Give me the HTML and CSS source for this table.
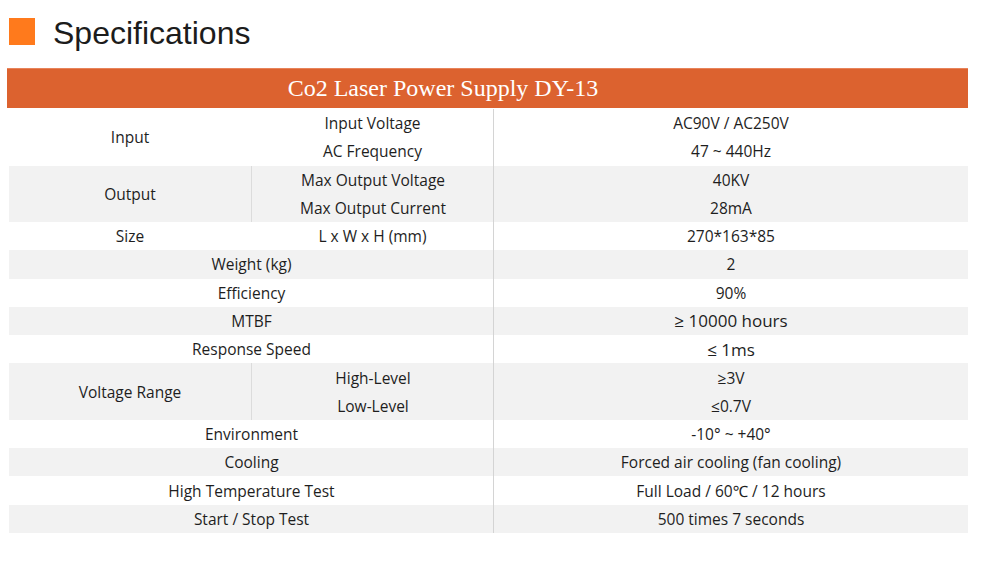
FILE: index.html
```html
<!DOCTYPE html>
<html lang="en">
<head>
<meta charset="utf-8">
<title>Specifications</title>
<link rel="stylesheet" href="styles.css">
</head>
<body>
<div class="page">
  <div class="heading">
    <span class="square"></span>
    <h1 class="title">Specifications</h1>
  </div>
  <div class="bar">Co2 Laser Power Supply DY-13</div>
  <div class="spec">
    <div class="cell c1 span2">Input</div>
    <div class="cell c2">Input Voltage</div>
    <div class="cell c3">AC90V / AC250V</div>
    <div class="cell c2">AC Frequency</div>
    <div class="cell c3">47 ~ 440Hz</div>

    <div class="cell c1 span2 grey">Output</div>
    <div class="cell c2 grey split">Max Output Voltage</div>
    <div class="cell c3 grey">40KV</div>
    <div class="cell c2 grey split">Max Output Current</div>
    <div class="cell c3 grey">28mA</div>

    <div class="cell c1">Size</div>
    <div class="cell c2">L x W x H (mm)</div>
    <div class="cell c3">270*163*85</div>

    <div class="cell wide grey">Weight (kg)</div>
    <div class="cell c3 grey">2</div>

    <div class="cell wide">Efficiency</div>
    <div class="cell c3">90%</div>

    <div class="cell wide grey">MTBF</div>
    <div class="cell c3 grey big">≥ 10000 hours</div>

    <div class="cell wide">Response Speed</div>
    <div class="cell c3 big">≤ 1ms</div>

    <div class="cell c1 span2 grey">Voltage Range</div>
    <div class="cell c2 grey split">High-Level</div>
    <div class="cell c3 grey">≥3V</div>
    <div class="cell c2 grey split">Low-Level</div>
    <div class="cell c3 grey">≤0.7V</div>

    <div class="cell wide">Environment</div>
    <div class="cell c3">-10° ~ +40°</div>

    <div class="cell wide grey">Cooling</div>
    <div class="cell c3 grey">Forced air cooling (fan cooling)</div>

    <div class="cell wide">High Temperature Test</div>
    <div class="cell c3">Full Load / 60℃ / 12 hours</div>

    <div class="cell wide grey">Start / Stop Test</div>
    <div class="cell c3 grey">500 times 7 seconds</div>
  </div>
</div>
</body>
</html>
```

FILE: styles.css
```css
html, body {
  margin: 0;
  padding: 0;
  background: #ffffff;
}

.page {
  width: 1000px;
  height: 564px;
  overflow: hidden;
}

.heading {
  display: flex;
  align-items: flex-start;
  padding: 15px 0 0 9px;
  height: 68px;
  box-sizing: border-box;
}

.square {
  width: 26px;
  height: 27px;
  background: #ff7a1c;
  margin-top: 3px;
  flex: none;
}

.title {
  margin: 0 0 0 18px;
  font-family: "Liberation Sans", Arial, sans-serif;
  font-weight: normal;
  font-size: 32px;
  line-height: 36px;
  color: #1c1c1c;
}

.bar {
  margin-left: 7px;
  width: 961px;
  height: 40px;
  box-sizing: border-box;
  padding-right: 89px;
  background: #dc622f;
  border-top: 1px solid #e8835a;
  color: #ffffff;
  font-family: "Liberation Serif", "Times New Roman", serif;
  font-size: 24px;
  line-height: 39px;
  text-align: center;
  margin-bottom: 1px;
}

.spec {
  margin-left: 9px;
  width: 959px;
  display: grid;
  grid-template-columns: 242px 243px 474px;
  grid-auto-rows: 28.27px;
  font-family: "Open Sans", "Noto Sans", sans-serif;
  font-size: 15.5px;
  color: #1e1e1e;
}

.cell {
  display: flex;
  align-items: center;
  justify-content: center;
  white-space: nowrap;
  background: #ffffff;
}

.c1 { grid-column: 1; }
.c2 { grid-column: 2; }
.c3 {
  grid-column: 3;
  border-left: 1px solid #d4d4d4;
  margin-left: -1px;
}
.wide { grid-column: 1 / span 2; }
.span2 { grid-row: span 2; }

.grey { background: #f2f2f2; }
.split { border-left: 1px solid #dcdcdc; }

.big { font-size: 17px; }
```
